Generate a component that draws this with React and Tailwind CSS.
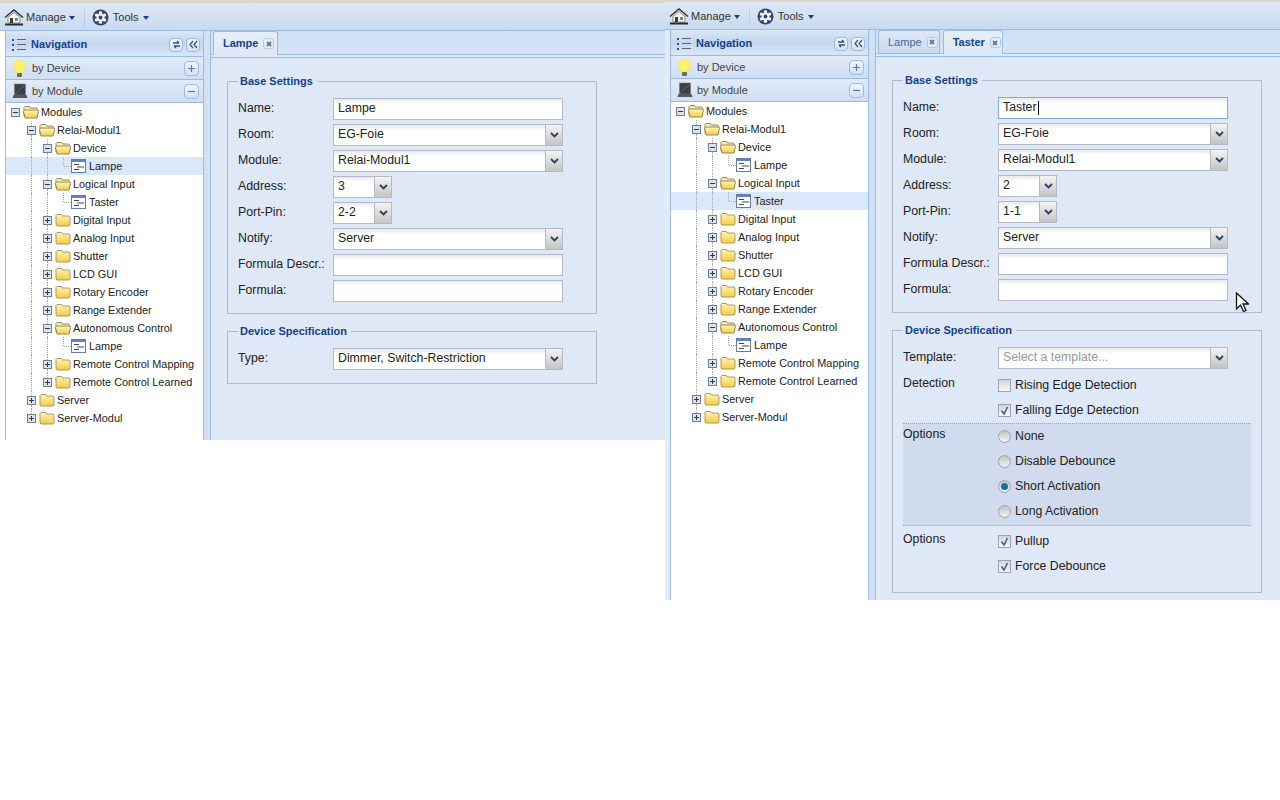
import React from 'react';

const treeRows = [
  { label: 'Modules', depth: 0, type: 'open', guides: [], root: true },
  { label: 'Relai-Modul1', depth: 1, type: 'open', guides: [], next: true },
  { label: 'Device', depth: 2, type: 'open', guides: [1], next: true },
  { label: 'Lampe', depth: 3, type: 'leaf', guides: [1, 2], id: 'lampe' },
  { label: 'Logical Input', depth: 2, type: 'open', guides: [1], next: true },
  { label: 'Taster', depth: 3, type: 'leaf', guides: [1, 2], id: 'taster' },
  { label: 'Digital Input', depth: 2, type: 'closed', guides: [1], next: true },
  { label: 'Analog Input', depth: 2, type: 'closed', guides: [1], next: true },
  { label: 'Shutter', depth: 2, type: 'closed', guides: [1], next: true },
  { label: 'LCD GUI', depth: 2, type: 'closed', guides: [1], next: true },
  { label: 'Rotary Encoder', depth: 2, type: 'closed', guides: [1], next: true },
  { label: 'Range Extender', depth: 2, type: 'closed', guides: [1], next: true },
  { label: 'Autonomous Control', depth: 2, type: 'open', guides: [1], next: true },
  { label: 'Lampe', depth: 3, type: 'leaf', guides: [1, 2] },
  { label: 'Remote Control Mapping', depth: 2, type: 'closed', guides: [1], next: true },
  { label: 'Remote Control Learned', depth: 2, type: 'closed', guides: [1] },
  { label: 'Server', depth: 1, type: 'closed', guides: [], next: true },
  { label: 'Server-Modul', depth: 1, type: 'closed', guides: [] },
];

function HouseIcon() {
  return (
    <svg width="20" height="19" viewBox="0 0 20 19">
      <path d="M1 9.500 10 2l9 7.500" fill="none" stroke="#333" strokeWidth="1.500" />
      <path d="M4 9.500 10 4.500l6 5V15H4z" fill="#f8f4e6" stroke="#666" strokeWidth="0.700" />
      <rect x="6" y="10" width="3" height="5" fill="#3d3d3d" />
      <rect x="11" y="10" width="3" height="3" fill="#6b86a8" />
      <path d="M1 16.500h18" stroke="#2a2a2a" strokeWidth="2" />
    </svg>
  );
}

function GearIcon() {
  return (
    <svg width="17" height="17" viewBox="0 0 17 17">
      <circle cx="8.500" cy="8.500" r="8" fill="#34466a" />
      <circle cx="8.500" cy="3.800" r="1.700" fill="#eef2f8" />
      <circle cx="8.500" cy="13.200" r="1.700" fill="#eef2f8" />
      <circle cx="4.400" cy="6.100" r="1.700" fill="#eef2f8" />
      <circle cx="12.600" cy="6.100" r="1.700" fill="#eef2f8" />
      <circle cx="4.400" cy="10.900" r="1.700" fill="#eef2f8" />
      <circle cx="12.600" cy="10.900" r="1.700" fill="#eef2f8" />
      <circle cx="8.500" cy="8.500" r="4" fill="#eef2f8" />
      <circle cx="8.500" cy="8.500" r="1.900" fill="#34466a" />
    </svg>
  );
}

function NavIcon() {
  return (
    <svg width="16" height="16" viewBox="0 0 16 16">
      <rect x="1" y="2" width="2" height="2" fill="#2450b8" />
      <rect x="1" y="7" width="2" height="2" fill="#2450b8" />
      <rect x="1" y="12" width="2" height="2" fill="#2450b8" />
      <path d="M6 2.500h9M6 7.500h9M6 12.500h9" stroke="#666" strokeWidth="1" />
    </svg>
  );
}

function BulbIcon() {
  return (
    <svg width="15" height="19" viewBox="0 0 15 19">
      <path d="M7.500 1a6 6 0 0 1 6 6c0 2.800-2 3.800-3 7h-6C3.500 10.800 1.500 9.800 1.500 7a6 6 0 0 1 6-6z" fill="#fdf06a" stroke="#ece070" strokeWidth="0.800" />
      <rect x="5" y="14" width="5" height="4" rx="1" fill="#6b6b60" />
    </svg>
  );
}

function ChipIcon() {
  return (
    <svg width="16" height="16" viewBox="0 0 16 16">
      <rect x="2.500" y="1" width="11" height="11" fill="#3b3f46" stroke="#777" strokeWidth="0.600" />
      <path d="M3 11 13 2" stroke="#5c6068" strokeWidth="1" />
      <path d="M1.500 12h13l1 3H.5z" fill="#55585e" />
    </svg>
  );
}

function ToolButton({ kind }) {
  return (
    <div className="flex h-[14px] w-[14px] items-center justify-center rounded-[4px] border border-[#99bbe8] bg-gradient-to-b from-[#f0f5fb] to-[#d3e1f3]">
      {kind === 'sync' ? (
        <svg width="9" height="9" viewBox="0 0 9 9">
          <path d="M1 3h6M5 1l2 2M8 6H2M4 8 2 6" fill="none" stroke="#35527e" strokeWidth="1.300" />
        </svg>
      ) : (
        <svg width="9" height="9" viewBox="0 0 9 9">
          <path d="M4 1 1 4.500 4 8M8 1 5 4.500 8 8" fill="none" stroke="#35527e" strokeWidth="1.200" />
        </svg>
      )}
    </div>
  );
}

function AccordionButton({ open }) {
  return (
    <div className="flex h-[15px] w-[15px] items-center justify-center rounded-[4px] border border-[#99bbe8] bg-gradient-to-b from-[#f0f5fb] to-[#d3e1f3]">
      <svg width="9" height="9" viewBox="0 0 9 9">
        <path d={open ? 'M1 4.500h7' : 'M1 4.500h7M4.500 1v7'} stroke="#5a7ba8" strokeWidth="1.200" />
      </svg>
    </div>
  );
}

function AccordionHead({ icon, label, open }) {
  return (
    <div className="flex h-[23px] items-center border-b border-[#99bbe8] bg-gradient-to-b from-[#e2ebf8] to-[#cfdef2] pl-[6px] pr-[4px]">
      <div className="flex w-[20px] shrink-0 items-center">{icon}</div>
      <span className="flex-1 text-[11px] text-[#444]">{label}</span>
      <AccordionButton open={open} />
    </div>
  );
}

function FolderIcon({ open }) {
  return (
    <svg width="16" height="14" viewBox="0 0 16 14">
      <defs>
        <linearGradient id="folderFill" x1="0" x2="0" y1="0" y2="1">
          <stop offset="0" stopColor="#fff5b8" />
          <stop offset="1" stopColor="#f6cb42" />
        </linearGradient>
      </defs>
      {open ? (
        <>
          <path d="M1 11V2.500l1-1h4.500l1 1.500h6l1 1v7z" fill="#fdeeb0" stroke="#8a7d55" strokeWidth="0.900" />
          <path d="M.5 6.500l1-1.500h13.500l.5 1.500-1.500 6.500H2z" fill="url(#folderFill)" stroke="#8a7d55" strokeWidth="0.900" />
        </>
      ) : (
        <path d="M1 12V2.500l1-1h4.500l1 1.500h6.500l1 1v8l-1 1H2z" fill="url(#folderFill)" stroke="#a09050" strokeWidth="0.900" />
      )}
    </svg>
  );
}

function LeafIcon() {
  return (
    <svg width="15" height="14" viewBox="0 0 15 14">
      <rect x="0.500" y="0.500" width="14" height="13" fill="#fff" stroke="#6a7c9a" />
      <rect x="1" y="1" width="13" height="2" fill="#5a86cc" />
      <path d="M3 5.500h5M6 8h7M3 10.500h5" stroke="#444" strokeWidth="1" />
    </svg>
  );
}

function Toggle({ open }) {
  return (
    <svg width="9" height="9" viewBox="0 0 9 9" className="block shrink-0">
      <rect x="0.500" y="0.500" width="8" height="8" fill="#dbe2ea" stroke="#6f7f94" />
      <path d={open ? 'M2 4.500h5' : 'M2 4.500h5M4.500 2v5'} stroke="#2b3b55" strokeWidth="1" />
    </svg>
  );
}

function TreeRow({ row, selected }) {
  const cols = [];
  for (let i = 0; i < row.depth; i++) {
    cols.push(
      <div key={i} className="h-full w-4 shrink-0">
        {row.guides.includes(i) ? <div className="h-full w-[9px] border-r border-dotted border-[#a8a8a8]" /> : null}
      </div>
    );
  }
  return (
    <div className={`flex h-[18px] items-center pl-[1px] ${selected ? 'bg-[#d9e8fb]' : ''}`}>
      {cols}
      {row.type === 'leaf' ? (
        <>
          <div className="h-full w-4 shrink-0">
            <div className="h-[9px] w-[9px] border-r border-dotted border-[#a8a8a8]" />
            <div className="ml-[9px] w-[7px] border-t border-dotted border-[#a8a8a8]" />
          </div>
          <div className="flex w-4 shrink-0 items-center"><LeafIcon /></div>
        </>
      ) : (
        <>
          <div className="flex h-full w-4 shrink-0 flex-col">
            <div className={`h-[5px] w-[9px] ${row.root ? '' : 'border-r border-dotted border-[#a8a8a8]'}`} />
            <div className="pl-[4px]"><Toggle open={row.type === 'open'} /></div>
            {row.next ? <div className="h-[4px] w-[9px] border-r border-dotted border-[#a8a8a8]" /> : null}
          </div>
          <div className="flex w-4 shrink-0 items-center"><FolderIcon open={row.type === 'open'} /></div>
        </>
      )}
      <span className="ml-[2px] whitespace-nowrap text-[10.9px] text-[#222]">{row.label}</span>
    </div>
  );
}

function Navigation({ selected }) {
  return (
    <div className="flex w-[199px] shrink-0 flex-col border-x border-[#99bbe8]">
      <div className="flex h-[26px] items-center border-b border-[#99bbe8] bg-gradient-to-b from-[#dae7f6] via-[#c4d7ef] to-[#dae7f6] pl-[5px] pr-[3px] pt-[2px]">
        <div className="w-[20px] shrink-0"><NavIcon /></div>
        <span className="flex-1 text-[11px] font-bold text-[#15428b]">Navigation</span>
        <div className="flex gap-[3px]">
          <ToolButton kind="sync" />
          <ToolButton kind="collapse" />
        </div>
      </div>
      <AccordionHead icon={<BulbIcon />} label="by Device" />
      <AccordionHead icon={<ChipIcon />} label="by Module" open />
      <div className="flex-1 overflow-hidden bg-white">
        {treeRows.map((row, i) => (
          <TreeRow key={i} row={row} selected={row.id === selected} />
        ))}
      </div>
    </div>
  );
}

function Chevron() {
  return (
    <div className="flex w-[17px] shrink-0 items-center justify-center border-l border-[#b5b8c8] bg-gradient-to-b from-[#f4f4f4] to-[#c4c4c4]">
      <svg width="9" height="6" viewBox="0 0 9 6">
        <path d="M1 1l3.500 3.500L8 1" fill="none" stroke="#2c3e66" strokeWidth="1.800" />
      </svg>
    </div>
  );
}

function Field({ label, value, select, small, focused, placeholder }) {
  return (
    <div className="mb-[4px] flex h-[22px] items-center">
      <div className="w-[95px] shrink-0 text-[12.3px] text-[#222]">{label}</div>
      <div
        className={`flex h-[22px] ${small ? 'w-[59px]' : 'w-[230px]'} border ${focused ? 'border-[#7eadd9]' : 'border-[#b5b8c8]'} bg-gradient-to-b from-[#e9e9e9] via-white via-25% to-white`}
      >
        <div className={`flex flex-1 items-center overflow-hidden pl-[4px] text-[12.3px] ${placeholder ? 'text-[#999]' : 'text-[#222]'}`}>
          {value || placeholder}
          {focused ? <span className="ml-px h-[14px] w-px bg-black" /> : null}
        </div>
        {select ? <Chevron /> : null}
      </div>
    </div>
  );
}

function Legend({ children }) {
  return <legend className="pl-[2px] pr-[4px] text-[11px] font-bold text-[#15428b]">{children}</legend>;
}

function CheckItem({ label, checked }) {
  return (
    <div className="flex h-[25px] items-center">
      <div className="flex h-[13px] w-[13px] items-center justify-center border border-[#9aa3b0] bg-gradient-to-b from-[#d4d4d4] to-[#f8f8f8]">
        {checked ? (
          <svg width="11" height="11" viewBox="0 0 11 11">
            <path d="M2.500 5.500l2.500 3.500 3.500-7" fill="none" stroke="#43598c" strokeWidth="1.500" />
          </svg>
        ) : null}
      </div>
      <span className="ml-[4px] text-[12.3px] text-[#222]">{label}</span>
    </div>
  );
}

function RadioItem({ label, checked }) {
  return (
    <div className="flex h-[25px] items-center">
      <div className="flex h-[13px] w-[13px] items-center justify-center rounded-full border border-[#9aa3b0] bg-gradient-to-b from-[#c4c4c4] to-[#f4f4f4]">
        {checked ? <div className="h-[7px] w-[7px] rounded-full bg-[#13709f]" /> : null}
      </div>
      <span className="ml-[4px] text-[12.3px] text-[#222]">{label}</span>
    </div>
  );
}

function OptionGroup({ label, children }) {
  return (
    <div className="flex">
      <div className="w-[95px] shrink-0 pt-[1px] text-[12.3px] text-[#222]">{label}</div>
      <div>{children}</div>
    </div>
  );
}

function LampeForm() {
  return (
    <>
      <fieldset className="h-[241px] w-[370px] border border-[#b5b8c8] pl-[10px] pt-[8px]">
        <Legend>Base Settings</Legend>
        <Field label="Name:" value="Lampe" />
        <Field label="Room:" value="EG-Foie" select />
        <Field label="Module:" value="Relai-Modul1" select />
        <Field label="Address:" value="3" select small />
        <Field label="Port-Pin:" value="2-2" select small />
        <Field label="Notify:" value="Server" select />
        <Field label="Formula Descr.:" />
        <Field label="Formula:" />
      </fieldset>
      <fieldset className="mt-[9px] h-[61px] w-[370px] border border-[#b5b8c8] pl-[10px] pt-[8px]">
        <Legend>Device Specification</Legend>
        <Field label="Type:" value="Dimmer, Switch-Restriction" select />
      </fieldset>
    </>
  );
}

function TasterForm() {
  return (
    <>
      <fieldset className="h-[241px] w-[370px] border border-[#b5b8c8] pl-[10px] pt-[8px]">
        <Legend>Base Settings</Legend>
        <Field label="Name:" value="Taster" focused />
        <Field label="Room:" value="EG-Foie" select />
        <Field label="Module:" value="Relai-Modul1" select />
        <Field label="Address:" value="2" select small />
        <Field label="Port-Pin:" value="1-1" select small />
        <Field label="Notify:" value="Server" select />
        <Field label="Formula Descr.:" />
        <Field label="Formula:" />
      </fieldset>
      <fieldset className="mt-[9px] h-[271px] w-[370px] border border-[#b5b8c8] pl-[10px] pt-[8px]">
        <Legend>Device Specification</Legend>
        <Field label="Template:" placeholder="Select a template..." select />
        <OptionGroup label="Detection">
          <CheckItem label="Rising Edge Detection" />
          <CheckItem label="Falling Edge Detection" checked />
        </OptionGroup>
        <div className="mb-[1px] mr-[10px] border-y border-dotted border-[#9aa8bd] bg-[#d0dcee] pb-[1px]">
          <OptionGroup label="Options">
            <RadioItem label="None" />
            <RadioItem label="Disable Debounce" />
            <RadioItem label="Short Activation" checked />
            <RadioItem label="Long Activation" />
          </OptionGroup>
        </div>
        <div className="pt-[2px]">
          <OptionGroup label="Options">
            <CheckItem label="Pullup" checked />
            <CheckItem label="Force Debounce" checked />
          </OptionGroup>
        </div>
      </fieldset>
    </>
  );
}

function TabClose() {
  return (
    <div className="flex h-[11px] w-[11px] items-center justify-center rounded-[3px] border border-[#b4c8e2] bg-[#e4edf8]">
      <svg width="8" height="8" viewBox="0 0 8 8">
        <path d="M2 2l4 4M6 2 2 6" stroke="#5a7ba8" strokeWidth="1.800" />
      </svg>
    </div>
  );
}

function Tab({ label, active, wide }) {
  return (
    <div
      className={`flex items-center gap-[5px] rounded-t-[3px] border border-b-0 border-[#99bbe8] pl-[9px] text-[11px] ${wide ? 'pr-[3px]' : 'pr-[1px]'} ${active ? '-mb-px h-[24px] bg-gradient-to-b from-[#e6eef9] to-[#dfe8f6] font-bold text-[#15428b]' : 'h-[23px] bg-gradient-to-b from-[#dfe8f6] to-[#c9daf0] text-[#416aa3]'}`}
    >
      {label}
      <TabClose />
    </div>
  );
}

function Pane({ width, height, strip, gutter, tabs, selected, children }) {
  return (
    <div className={`relative flex shrink-0 flex-col overflow-hidden bg-[#d2e0f2] ${width} ${height}`}>
      <div className={`shrink-0 bg-[#dcd5cc] ${strip}`} />
      <div className="flex h-[28px] shrink-0 items-center border-b border-[#99bbe8] bg-gradient-to-b from-[#dde8f6] to-[#c9daef] pl-[4px] pt-[2px]">
        <HouseIcon />
        <span className="ml-[2px] text-[11px] text-[#333]">Manage</span>
        <span className="ml-[3px] border-x-[3px] border-t-[4px] border-x-transparent border-t-[#15428b]" />
        <div className="ml-[9px] mr-[7px] h-[18px] w-px bg-[#b8cde6]" />
        <GearIcon />
        <span className="ml-[4px] text-[11px] text-[#333]">Tools</span>
        <span className="ml-[5px] border-x-[3px] border-t-[4px] border-x-transparent border-t-[#15428b]" />
      </div>
      <div className="flex min-h-0 flex-1">
        <div className={`w-[5px] shrink-0 ${gutter}`} />
        <Navigation selected={selected} />
        <div className="w-[6px] shrink-0" />
        <div className="flex min-w-0 flex-1 flex-col border-l border-[#99bbe8]">
          <div className="flex h-[24px] shrink-0 items-end gap-[3px] border-b border-[#99bbe8] bg-gradient-to-b from-[#cedff5] to-[#d6e3f5] pl-[2px]">
            {tabs}
          </div>
          <div className="h-[3px] shrink-0 border-b border-[#99bbe8] bg-[#dfe8f6]" />
          <div className="flex-1 bg-[#dfe8f6] pl-[16px] pt-[15px]">{children}</div>
        </div>
      </div>
    </div>
  );
}

export default function App() {
  return (
    <div className="flex min-h-[800px] items-start bg-white font-['Liberation_Sans',Arial,sans-serif]">
      <Pane
        width="w-[665px]"
        height="h-[440px]"
        strip="h-[3px]"
        gutter="bg-white"
        selected="lampe"
        tabs={<Tab label="Lampe" active wide />}
      >
        <LampeForm />
      </Pane>
      <Pane
        width="w-[615px]"
        height="h-[600px]"
        strip="h-[2px]"
        gutter="bg-[#e3eaf8]"
        selected="taster"
        tabs={
          <>
            <Tab label="Lampe" />
            <Tab label="Taster" active />
          </>
        }
      >
        <TasterForm />
        <svg width="14" height="21" viewBox="0 0 14 21" className="absolute left-[570px] top-[292px]">
          <path d="M1.500 1v16l4-4 3 6.500 2.500-1-3-6.500h5.500z" fill="#fff" stroke="#111" strokeWidth="1.300" />
        </svg>
      </Pane>
    </div>
  );
}
